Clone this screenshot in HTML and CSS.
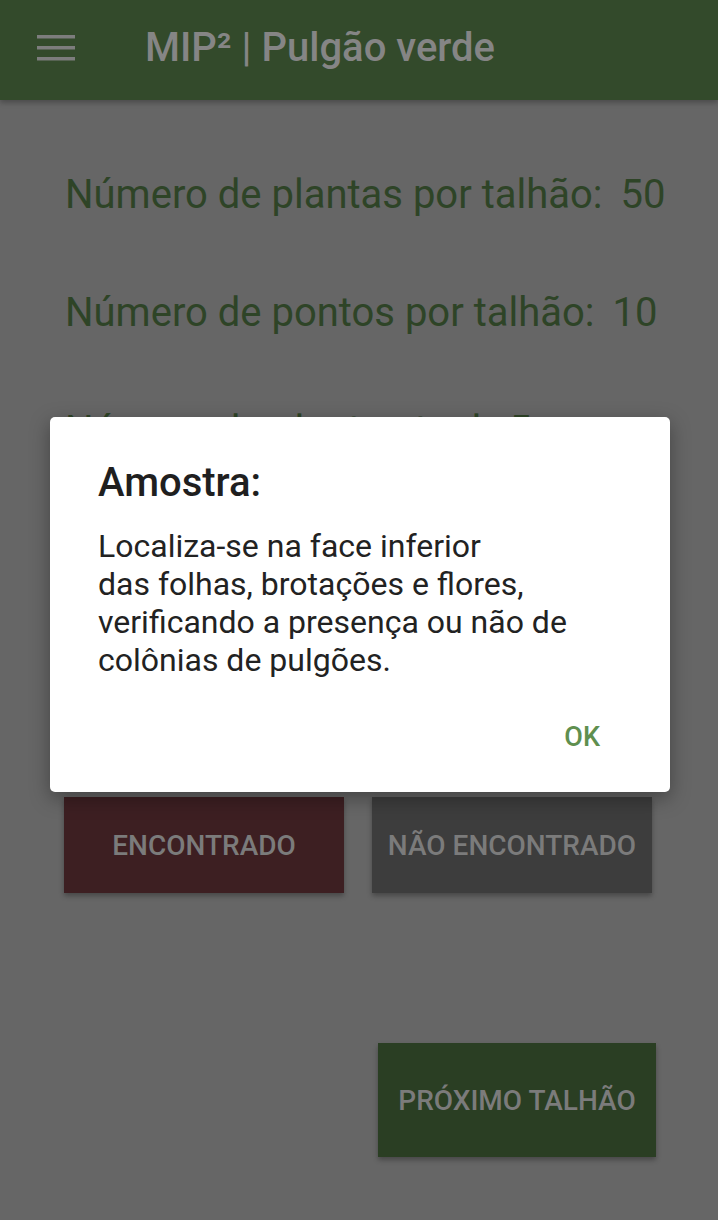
FILE: index.html
```html
<!DOCTYPE html>
<html lang="pt">
<head>
<meta charset="utf-8">
<title>MIP² | Pulgão verde</title>
<link rel="stylesheet" href="styles.css">
</head>
<body>
<header class="appbar">
  <svg class="menu" width="38" height="26" viewBox="0 0 38 26"><rect x="0" y="0" width="38" height="3.5" fill="#7d7d7d"/><rect x="0" y="11" width="38" height="3.5" fill="#7d7d7d"/><rect x="0" y="22" width="38" height="3.5" fill="#7d7d7d"/></svg>
  <h1 class="title">MIP² | Pulgão verde</h1>
</header>
<main class="content">
  <div class="stats">
    <p class="stat">Número de plantas por talhão: <span class="val">50</span></p>
    <p class="stat">Número de pontos por talhão: <span class="val">10</span></p>
    <p class="stat">Número da planta atual: <span class="val">5</span></p>
  </div>
  <div class="actions">
    <button class="btn btn-found">ENCONTRADO</button>
    <button class="btn btn-notfound">NÃO ENCONTRADO</button>
  </div>
  <div class="next-row">
    <button class="btn btn-next">PRÓXIMO TALHÃO</button>
  </div>
</main>
<div class="dialog">
  <h2 class="dialog-title">Amostra:</h2>
  <p class="dialog-text">Localiza-se na face inferior<br>das folhas, brotações e flores,<br>verificando a presença ou não de<br>colônias de pulgões.</p>
  <div class="dialog-actions"><button class="ok">OK</button></div>
</div>
</body>
</html>
```
FILE: styles.css
```css
* { box-sizing: border-box; }
html, body { margin: 0; padding: 0; }
body {
  width: 718px;
  height: 1220px;
  background: #666666;
  font-family: Roboto, "Liberation Sans", sans-serif;
  position: relative;
  overflow: hidden;
}
.appbar {
  height: 100px;
  background: #334a2b;
  display: flex;
  align-items: center;
  padding-left: 37px;
  box-shadow: 0 3px 5px rgba(0,0,0,0.25);
}
.menu { display: block; margin-top: -5px; }
.title {
  margin: -6px 0 0 70px;
  font-size: 40px;
  font-weight: 500;
  color: #858585;
}
.content {
  padding: 71px 0 0 65px;
}
.stats {
  display: flex;
  flex-direction: column;
  gap: 70px;
}
.stat {
  margin: 0;
  font-size: 40px;
  line-height: 48px;
  color: #2e4427;
}
.stat .val { margin-left: 8px; }
.actions {
  margin-top: 342px;
  display: flex;
  gap: 28px;
}
.btn {
  border: 0;
  padding: 0;
  font-family: Roboto, "Liberation Sans", sans-serif;
  font-weight: 500;
  font-size: 28px;
  color: #7b7b7b;
  box-shadow: 0 3px 5px rgba(0,0,0,0.3);
}
.actions .btn { width: 280px; height: 96px; }
.btn-found { background: #3d1f22; margin-left: -1px; }
.btn-notfound { background: #3d3d3d; }
.next-row {
  display: flex;
  justify-content: flex-end;
  padding-right: 62px;
  margin-top: 150px;
}
.btn-next {
  width: 278px;
  height: 114px;
  background: #2a3e23;
}
.dialog {
  position: absolute;
  left: 50px;
  top: 417px;
  width: 620px;
  height: 375px;
  background: #ffffff;
  border-radius: 5px;
  box-shadow: 0 6px 20px rgba(0,0,0,0.35);
  padding: 44px 48px 0 48px;
}
.dialog-title {
  margin: 0;
  font-size: 40px;
  font-weight: 500;
  color: #1f1f1f;
  line-height: 44px;
}
.dialog-text {
  margin: 22px 0 0 0;
  font-size: 32px;
  line-height: 38px;
  color: #222222;
}
.dialog-actions {
  display: flex;
  justify-content: flex-end;
  margin-top: 42px;
  padding-right: 22px;
}
.ok {
  border: 0;
  background: none;
  font-family: Roboto, "Liberation Sans", sans-serif;
  font-weight: 500;
  font-size: 27px;
  line-height: 32px;
  color: #5f8f4f;
  padding: 0;
}
```
